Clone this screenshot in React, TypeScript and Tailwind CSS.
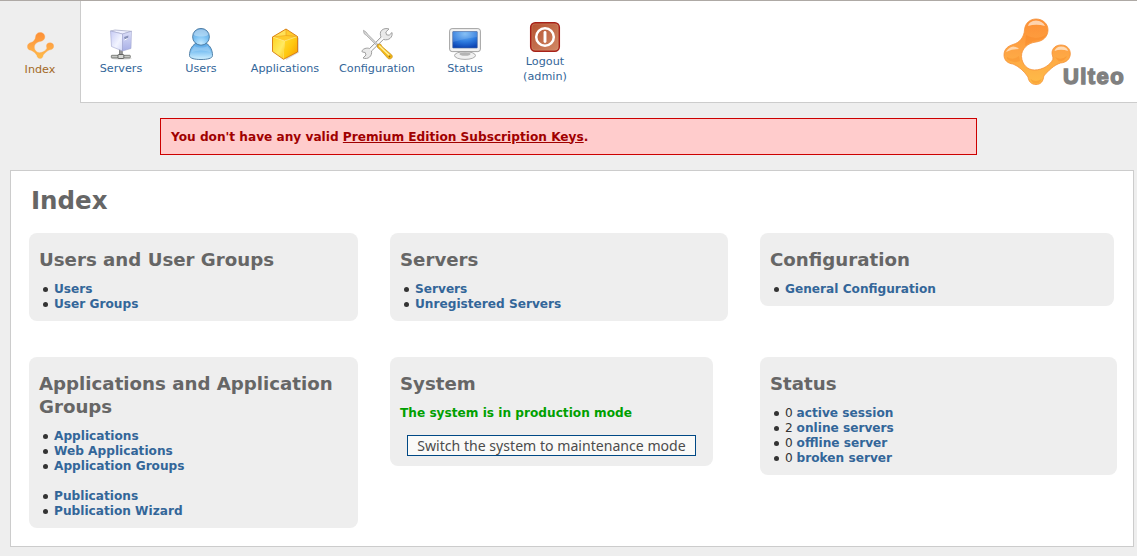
import type { ReactNode } from "react";

function UlteoMark({ className, id, glossy = false }: { className: string; id: string; glossy?: boolean }) {
  return (
    <svg className={className} viewBox="0 0 68 68" aria-hidden="true">
      <defs>
        <linearGradient id={id} x1="0" y1="0" x2="0" y2="1">
          <stop offset="0" stopColor="#fd8f35" />
          <stop offset="0.5" stopColor="#fea544" />
          <stop offset="1" stopColor="#febc48" />
        </linearGradient>
      </defs>
      <path
        d="M33 1C40 1 45.300 6 45 12.500C44.500 19 40 23 33 24C24.500 25 18.300 31 18.500 38.500C19 46.500 24.500 52 31.500 52C40 52 47.500 46.500 49.800 41.500C50.500 39 48.800 37 49 34.500C49.300 30 53 27 58 27C63.500 27 67.400 30.500 67.300 36C67 41.500 63 44.500 57.500 45C51 47 45 53 40.800 58C40.300 63 38 66.500 33 66.500C28 66.500 25.500 63 25 59C21 53 16 48.500 10 46C4.500 45.500 1 42 1 37C1 31 5 28 10 26.500C17 24.500 21 19 21.500 12C22 5 27 1 33 1Z"
        fill={`url(#${id})`}
        stroke={glossy ? "#f59238" : "#fda24e"}
        strokeWidth="0.800"
      />
      {glossy && (
        <g>
          <path d="M25 8Q26 3 33 2.500Q40 3 42 8Q33 5.500 25 8Z" fill="#fff" opacity="0.6" />
          <path d="M51.500 33Q53 28.500 58 28.500Q64 28.500 65 33Q58 30.500 51.500 33Z" fill="#fff" opacity="0.6" />
          <path d="M3 34Q5 29.500 10 28.500Q14 28.500 16 31Q9 31 3 34Z" fill="#fff" opacity="0.55" />
          <path d="M23 17Q33 23 43 17Q40 22 33 22.500Q27 23.500 22 28Z" fill="#f47a1c" opacity="0.3" />
          <path d="M4 39Q10 43 16 38L17 43Q10 46 4 41Z" fill="#f47a1c" opacity="0.25" />
          <path d="M52 39Q58 43 64 38Q62 43 56 43.500Z" fill="#f47a1c" opacity="0.3" />
          <path d="M27.500 61Q33 65 38.500 61Q37 65.500 33 65.500Q29 65.500 27.500 61Z" fill="#f58a22" opacity="0.4" />
        </g>
      )}
    </svg>
  );
}

function ServerIcon() {
  return (
    <svg className="h-8 w-8" viewBox="0 0 32 32" aria-hidden="true">
      <defs>
        <linearGradient id="serverFace" x1="0" y1="0" x2="1" y2="1">
          <stop offset="0" stopColor="#c6caf5" />
          <stop offset="0.6" stopColor="#f2f4ff" />
          <stop offset="1" stopColor="#d3d8f9" />
        </linearGradient>
        <linearGradient id="serverSide" x1="0" y1="0" x2="0" y2="1">
          <stop offset="0" stopColor="#dcdff8" />
          <stop offset="1" stopColor="#a7aee6" />
        </linearGradient>
      </defs>
      <ellipse cx="16.500" cy="30.300" rx="10.500" ry="1.300" fill="#000" opacity="0.14" />
      <rect x="6.300" y="27.300" width="19" height="2.600" rx="0.600" fill="#c6c7c4" stroke="#686966" strokeWidth="0.800" />
      <rect x="14.600" y="21" width="2.600" height="6" fill="#999" stroke="#4f504f" strokeWidth="0.600" />
      <rect x="13" y="26.500" width="5.800" height="4" rx="0.800" fill="#d7d8d5" stroke="#4f504f" strokeWidth="0.800" />
      <path d="M5.500 3L10 2L26.500 3.300L17.500 6Z" fill="#f0f1ff" stroke="#9095b5" strokeWidth="0.600" />
      <path d="M5.500 3L17.500 6L17.500 23L6.500 18.500Z" fill="url(#serverFace)" stroke="#a2a7d0" strokeWidth="0.600" />
      <path d="M17.500 6L26.500 3.300L26 20.500L17.500 23Z" fill="url(#serverSide)" stroke="#9a9fc8" strokeWidth="0.500" />
      <path d="M19 9L23.500 7.500L23 10L20 12Z" fill="#8992b9" />
      <path d="M19.500 12L22.500 10.500" stroke="#fff" strokeWidth="1" />
    </svg>
  );
}

function UserIcon() {
  return (
    <svg className="h-8 w-8" viewBox="0 0 32 32" aria-hidden="true">
      <defs>
        <radialGradient id="userHead" cx="0.5" cy="0.9" r="0.85">
          <stop offset="0" stopColor="#c6eaff" />
          <stop offset="0.55" stopColor="#7bc1f3" />
          <stop offset="1" stopColor="#68a8de" />
        </radialGradient>
        <linearGradient id="userBody" x1="0" y1="0" x2="0" y2="1">
          <stop offset="0" stopColor="#5aa7e6" />
          <stop offset="0.45" stopColor="#7abff2" />
          <stop offset="1" stopColor="#d2f1ff" />
        </linearGradient>
      </defs>
      <path d="M10.500 15.500C6.500 18 4.500 22.500 4.500 27.500C4.500 30.500 10 31.500 16 31.500C22 31.500 27.500 30.500 27.500 27.500C27.500 22.500 25.500 18 21.500 15.500Z" fill="url(#userBody)" stroke="#47779f" strokeWidth="0.900" />
      <circle cx="16" cy="8.800" r="8.400" fill="url(#userHead)" stroke="#47779f" strokeWidth="0.900" />
      <path d="M9 7C9 3 12.500 1.500 16 1.500S23 3 23 7C20 9 12 9 9 7Z" fill="#fff" opacity="0.35" />
      <path d="M9.500 18C13 20 19 20 22.500 18Q25 21 25.500 24Q16 21 6.500 24Q7 21 9.500 18Z" fill="#fff" opacity="0.2" />
    </svg>
  );
}

function ApplicationsIcon() {
  return (
    <svg className="h-8 w-8" viewBox="0 0 32 32" aria-hidden="true">
      <defs>
        <linearGradient id="cubeLeft" x1="0" y1="0" x2="1" y2="1">
          <stop offset="0" stopColor="#ffd322" />
          <stop offset="0.6" stopColor="#ffeb62" />
          <stop offset="1" stopColor="#ffc51a" />
        </linearGradient>
        <linearGradient id="cubeRight" x1="0" y1="0" x2="1" y2="1">
          <stop offset="0" stopColor="#ffdf35" />
          <stop offset="0.5" stopColor="#ffc70f" />
          <stop offset="1" stopColor="#f89a00" />
        </linearGradient>
      </defs>
      <path d="M17 2L30 10V24.500L17 32Z" fill="#777" opacity="0.25" />
      <path d="M3.500 9L15.500 13L14.500 31.300L3.500 23.500Z" fill="url(#cubeLeft)" />
      <path d="M15.500 13L28.500 8.500V24L14.500 31.300Z" fill="url(#cubeRight)" />
      <path d="M3.500 9L17 1L28.500 8.500L15.500 13Z" fill="#ffcb2c" />
      <path d="M17 1V7.500L3.500 9Z" fill="#ffe158" />
      <path d="M17 1V7.500L28.500 8.500" fill="none" stroke="#eda21d" strokeWidth="0.700" />
      <path d="M3.500 9L17 7.500" stroke="#eda21d" strokeWidth="0.600" />
      <path d="M3.500 9L15.500 13L28.500 8.500" fill="none" stroke="#ffeb83" strokeWidth="0.600" />
      <path d="M3.500 9L17 1L28.500 8.500V24L14.500 31.300L3.500 23.500Z" fill="none" stroke="#d6780f" strokeWidth="0.900" />
    </svg>
  );
}

function ConfigurationIcon() {
  return (
    <svg className="h-8 w-8" viewBox="0 0 32 32" aria-hidden="true">
      <path d="M20.500 2.500C22.500 0.500 25.500 0 28 1L24.800 4L25.500 6.800L28.200 7.200L31 4.500C32 9 28 13 22.500 11.500L10.500 23C11.500 28 7 32 2 30L5 27L4.200 24.500L1.300 24C0.300 23 1.500 21.500 4 20.500C5.500 20 7 20 8.500 20.500L20 9C19 6.500 19 4 20.500 2.500Z" fill="#eaeaea" stroke="#979797" strokeWidth="0.900" />
      <path d="M9.500 22L22 10" stroke="#fff" strokeWidth="1.200" />
      <path d="M2.500 2.300L5 4L7 6.500L18 17.500L17 18.800L5.500 7.500L3 5.500Z" fill="#d9d9d9" stroke="#8c8c8c" strokeWidth="0.600" />
      <path d="M16.500 16.500L19.500 16L21 18.500L30.800 27C32.500 29.500 29.500 32 27 30.500L19 21.500L16.500 19.500Z" fill="#f5bb18" stroke="#c48c1c" strokeWidth="0.700" />
      <path d="M18.500 18L28 27" stroke="#fff0a1" strokeWidth="1.400" strokeLinecap="round" />
      <circle cx="28.500" cy="28.500" r="0.900" fill="#9a6c11" />
    </svg>
  );
}

function StatusIcon() {
  return (
    <svg className="h-8 w-8" viewBox="0 0 32 32" aria-hidden="true">
      <defs>
        <radialGradient id="statusScreen" cx="0.5" cy="0.15" r="0.85">
          <stop offset="0" stopColor="#77b8f4" />
          <stop offset="0.55" stopColor="#2e7cdf" />
          <stop offset="1" stopColor="#0d46b5" />
        </radialGradient>
      </defs>
      <path d="M11 23H21L22 26H10Z" fill="#b7b7b7" />
      <ellipse cx="16" cy="27.500" rx="10.500" ry="3.900" fill="#f1f1f1" stroke="#999" strokeWidth="0.800" />
      <ellipse cx="16" cy="26" rx="5.500" ry="1.800" fill="#b4b4b4" />
      <rect x="0.600" y="0.600" width="30.800" height="23" rx="2.500" fill="#f2f2f2" stroke="#999" strokeWidth="0.900" />
      <rect x="3.700" y="3.500" width="24.600" height="16.500" rx="0.500" fill="url(#statusScreen)" stroke="#4b689a" strokeWidth="0.600" />
      <path d="M4 4H28V9Q18 10 4 14Z" fill="#fff" opacity="0.12" />
    </svg>
  );
}

function LogoutIcon() {
  return (
    <svg className="h-8 w-8" viewBox="0 0 32 32" aria-hidden="true">
      <defs>
        <linearGradient id="logoutFace" x1="0" y1="0" x2="1" y2="1">
          <stop offset="0" stopColor="#b4502e" />
          <stop offset="1" stopColor="#d28b68" />
        </linearGradient>
      </defs>
      <rect x="1.700" y="1.700" width="28.600" height="28.600" rx="4.500" fill="url(#logoutFace)" stroke="#a72118" strokeWidth="1.500" />
      <rect x="3" y="3" width="26" height="26" rx="3" fill="none" stroke="#dca084" strokeWidth="0.500" opacity="0.5" />
      <circle cx="16" cy="16" r="8.800" fill="none" stroke="#fff" strokeWidth="2.500" />
      <path d="M16 11.500V20.500" stroke="#fff" strokeWidth="2.900" strokeLinecap="round" />
    </svg>
  );
}

function NavItem({ icon, width, lift = false, children }: { icon: ReactNode; width: string; lift?: boolean; children: ReactNode }) {
  return (
    <a className={`flex flex-col items-center text-center text-[11.2px] leading-[15px] text-[#336699] ${width} ${lift ? "pt-5" : "pt-[27px]"}`}>
      {icon}
      <span className="mt-px">{children}</span>
    </a>
  );
}

function Card({ title, width, children }: { title: string; width: string; children: ReactNode }) {
  return (
    <section className={`rounded-lg bg-[#eeeeee] px-[10px] pt-[15px] pb-[9px] ${width}`}>
      <h2 className="mb-[11px] text-[18.2px] leading-[23px] font-bold text-[#666666]">{title}</h2>
      {children}
    </section>
  );
}

function Item({ count, children }: { count?: number; children: ReactNode }) {
  return (
    <li className="flex items-center">
      <span className="mr-[6px] mb-px ml-[4px] h-[5px] w-[5px] shrink-0 rounded-full bg-[#333333]" />
      <span className="whitespace-pre text-[#333333]">
        {count !== undefined && `${count} `}
        <a className="font-bold text-[#336699]">{children}</a>
      </span>
    </li>
  );
}

export default function App() {
  return (
    <div className="h-[556px] overflow-hidden bg-[#eeeeee] font-['DejaVu_Sans',sans-serif] text-[12.15px] leading-[15px]">
      <header className="flex h-[103px] border-t border-[#aea9a5]">
        <a className="flex w-20 flex-col items-center pt-[31px] text-[11.2px] leading-[15px] text-[#a3691f]">
          <UlteoMark className="h-[27px] w-[27px]" id="markSmall" />
          <span className="mt-[3px]">Index</span>
        </a>
        <div className="flex flex-1 border-b border-l border-[#cccccc] bg-white">
          <NavItem icon={<ServerIcon />} width="w-20">Servers</NavItem>
          <NavItem icon={<UserIcon />} width="w-20">Users</NavItem>
          <NavItem icon={<ApplicationsIcon />} width="w-[88px]">Applications</NavItem>
          <NavItem icon={<ConfigurationIcon />} width="w-24">Configuration</NavItem>
          <NavItem icon={<StatusIcon />} width="w-20">Status</NavItem>
          <NavItem icon={<LogoutIcon />} width="w-20" lift>Logout<br />(admin)</NavItem>
          <div className="mr-[12px] ml-auto flex pt-[17px]">
            <UlteoMark className="h-[68px] w-[68px]" id="markLarge" glossy />
            <span className="mt-[44px] ml-[-8px] w-[62px] font-['Liberation_Sans',sans-serif] text-[22px] leading-[30px] font-bold tracking-[1.4px] text-[#808080] [-webkit-text-stroke:1.4px_#808080]">Ulteo</span>
          </div>
        </div>
      </header>

      <div className="mt-[15px] ml-40 flex h-[37px] w-[817px] items-center border border-[#cc0000] bg-[#ffcccc] px-[10px] pt-px font-bold text-[#a00000]">
        <p>You don't have any valid <a className="underline">Premium Edition Subscription Keys</a>.</p>
      </div>

      <main className="mt-[15px] ml-[10px] h-[377px] w-[1124px] border border-[#cccccc] bg-white pt-[15px] pl-[18px]">
        <h1 className="ml-[2px] text-[24.5px] leading-[30px] font-bold text-[#666666]">Index</h1>
        <div className="mt-[17px] flex h-[124px] items-start">
          <div className="w-[361px]">
            <Card title="Users and User Groups" width="w-[329px]">
              <ul><Item>Users</Item><Item>User Groups</Item></ul>
            </Card>
          </div>
          <div className="w-[370px]">
            <Card title="Servers" width="w-[338px]">
              <ul><Item>Servers</Item><Item>Unregistered Servers</Item></ul>
            </Card>
          </div>
          <Card title="Configuration" width="w-[354px]">
            <ul><Item>General Configuration</Item></ul>
          </Card>
        </div>
        <div className="flex items-start">
          <div className="w-[361px]">
            <Card title="Applications and Application Groups" width="w-[329px]">
              <ul><Item>Applications</Item><Item>Web Applications</Item><Item>Application Groups</Item></ul>
              <ul className="mt-[15px]"><Item>Publications</Item><Item>Publication Wizard</Item></ul>
            </Card>
          </div>
          <div className="w-[370px]">
            <Card title="System" width="w-[323px]">
              <p className="font-bold text-[#00a000]">The system is in production mode</p>
              <button className="mt-[14px] mb-px ml-[7px] flex h-[21px] w-[289px] items-center justify-center border border-[#004985] bg-[#fafaf8] font-['Noto_Sans',sans-serif] text-[14.1px] whitespace-nowrap text-[#4c4c4c]">
                Switch the system to maintenance mode
              </button>
            </Card>
          </div>
          <Card title="Status" width="w-[357px]">
            <ul>
              <Item count={0}>active session</Item>
              <Item count={2}>online servers</Item>
              <Item count={0}>offline server</Item>
              <Item count={0}>broken server</Item>
            </ul>
          </Card>
        </div>
      </main>
    </div>
  );
}
